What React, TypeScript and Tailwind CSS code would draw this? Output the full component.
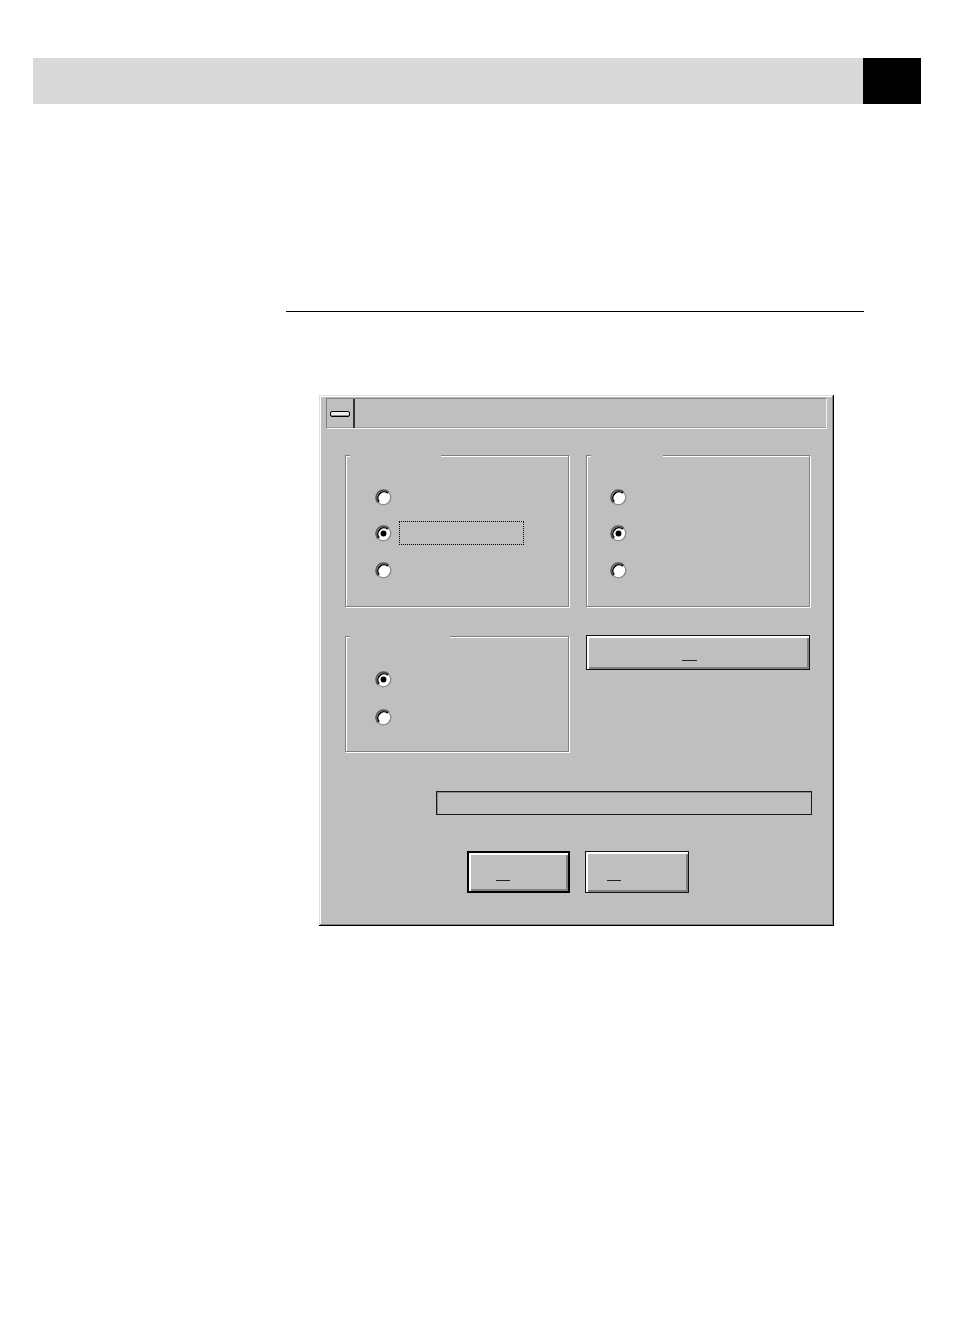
import React from 'react';

// Win95-style radio drawn as svg
const Radio: React.FC<{ checked?: boolean }> = ({ checked = false }) => (
  <svg width="17" height="17" viewBox="0 0 15 15" className="block shrink-0 -mx-px">
    <circle cx="7.5" cy="7.5" r="6.4" fill="#fff" stroke="#8a8a8a" strokeWidth="1" />
    <path d="M2.8 12.2 A6.6 6.6 0 0 1 12.2 2.8" fill="none" stroke="#555" strokeWidth="1.3" />
    <path d="M3.7 11.3 A5.4 5.4 0 0 1 11.3 3.7" fill="none" stroke="#000" strokeWidth="1.4" />
    <path d="M13.9 6 A7 7 0 0 1 6 13.9" fill="none" stroke="#8e8e8e" strokeWidth="0.9" />
    {checked && <circle cx="7.5" cy="7.5" r="2.6" fill="#000" />}
  </svg>
);

const GroupBox: React.FC<{
  gapClass: string;
  className: string;
  children?: React.ReactNode;
}> = ({ gapClass, className, children }) => (
  <div
    className={`relative border border-[#808080] shadow-[1px_1px_0_#fff,inset_1px_1px_0_#fff] ${className}`}
  >
    {/* gap where the caption sat */}
    <div className={`absolute -top-[2px] left-[4px] h-[4px] bg-[#bfbfbf] ${gapClass}`} />
    {children}
  </div>
);

const Mnemonic: React.FC<{ className: string }> = ({ className }) => (
  <div className={`h-px bg-[#222] ${className}`} />
);

export default function App() {
  return (
    <div className="w-[954px] h-[1343px] bg-white" style={{ fontFamily: '"Liberation Sans", Arial, sans-serif' }}>
      {/* page header bar */}
      <div className="flex pt-[58px] pl-[33px]">
        <div className="w-[830px] h-[46px] bg-[#d9d9d9]" />
        <div className="w-[58px] h-[46px] bg-black" />
      </div>

      {/* rule */}
      <div className="ml-[286px] mt-[207px] w-[578px] h-px bg-black" />

      {/* dialog */}
      <div className="ml-[319px] mt-[83px] w-[515px] h-[531px] bg-[#bfbfbf] shadow-[inset_-1px_-1px_0_#000,inset_1px_1px_0_#dfdfdf,inset_-2px_-2px_0_#808080,inset_2px_2px_0_#fff]">
        {/* title area */}
        <div className="pt-[3px] px-[7px]">
          <div className="flex h-[31px] border border-[#808080] border-b-[#f4f4f4] border-r-[#f4f4f4] shadow-[inset_0_-1px_0_#9a9a9a]">
            <div className="flex w-[28px] items-center justify-center border-r-2 border-[#333]">
              <div className="w-[20px] h-[6px] rounded-[2px] border border-black bg-[#eee] shadow-[inset_0_-1px_0_#888]" />
            </div>
          </div>
        </div>

        <div className="pl-[26px]">
          {/* row 1 */}
          <div className="mt-[26px] flex gap-[17px]">
            <GroupBox gapClass="w-[91px]" className="w-[224px] h-[152px]">
              <div className="flex flex-col gap-[12px] pl-[30px] pt-[29px]">
                <div className="flex h-[24px] items-center">
                  <Radio />
                </div>
                <div className="flex h-[24px] items-center">
                  <Radio checked />
                  <div className="ml-[8px] w-[125px] h-[24px] border border-dotted border-black" />
                </div>
                <div className="mt-px flex h-[24px] items-center">
                  <Radio />
                </div>
              </div>
            </GroupBox>
            <GroupBox gapClass="w-[72px]" className="w-[224px] h-[152px]">
              <div className="flex flex-col gap-[12px] pl-[24px] pt-[29px]">
                <div className="flex h-[24px] items-center">
                  <Radio />
                </div>
                <div className="flex h-[24px] items-center">
                  <Radio checked />
                </div>
                <div className="mt-px flex h-[24px] items-center">
                  <Radio />
                </div>
              </div>
            </GroupBox>
          </div>

          {/* row 2 */}
          <div className="mt-[28px] flex items-start gap-[17px]">
            <GroupBox gapClass="w-[100px]" className="mt-[1px] w-[224px] h-[116px]">
              <div className="flex flex-col gap-[14px] pl-[30px] pt-[30px]">
                <div className="flex h-[24px] items-center">
                  <Radio checked />
                </div>
                <div className="flex h-[24px] items-center">
                  <Radio />
                </div>
              </div>
            </GroupBox>
            <div className="w-[224px] h-[35px] border border-[#111] bg-[#bfbfbf] shadow-[inset_2px_2px_0_#fff,inset_-2px_-2px_0_#808080] flex items-end justify-start">
              <Mnemonic className="ml-[95px] mb-[8px] w-[15px]" />
            </div>
          </div>

          {/* edit field */}
          <div className="mt-[39px] ml-[91px] w-[376px] h-[24px] border border-[#1a1a1a] shadow-[inset_1px_1px_0_#8a8a8a]" />

          {/* buttons */}
          <div className="mt-[36px] ml-[122px] flex gap-[15px]">
            <div className="w-[103px] h-[42px] border-2 border-black bg-[#bfbfbf] shadow-[inset_2px_2px_0_#fff,inset_-2px_-2px_0_#808080] flex items-end">
              <Mnemonic className="ml-[27px] mb-[10px] w-[14px]" />
            </div>
            <div className="w-[104px] h-[42px] border border-[#111] bg-[#bfbfbf] shadow-[inset_2px_2px_0_#fff,inset_-2px_-2px_0_#808080] flex items-end">
              <Mnemonic className="ml-[21px] mb-[11px] w-[14px]" />
            </div>
          </div>
        </div>
      </div>
    </div>
  );
}
